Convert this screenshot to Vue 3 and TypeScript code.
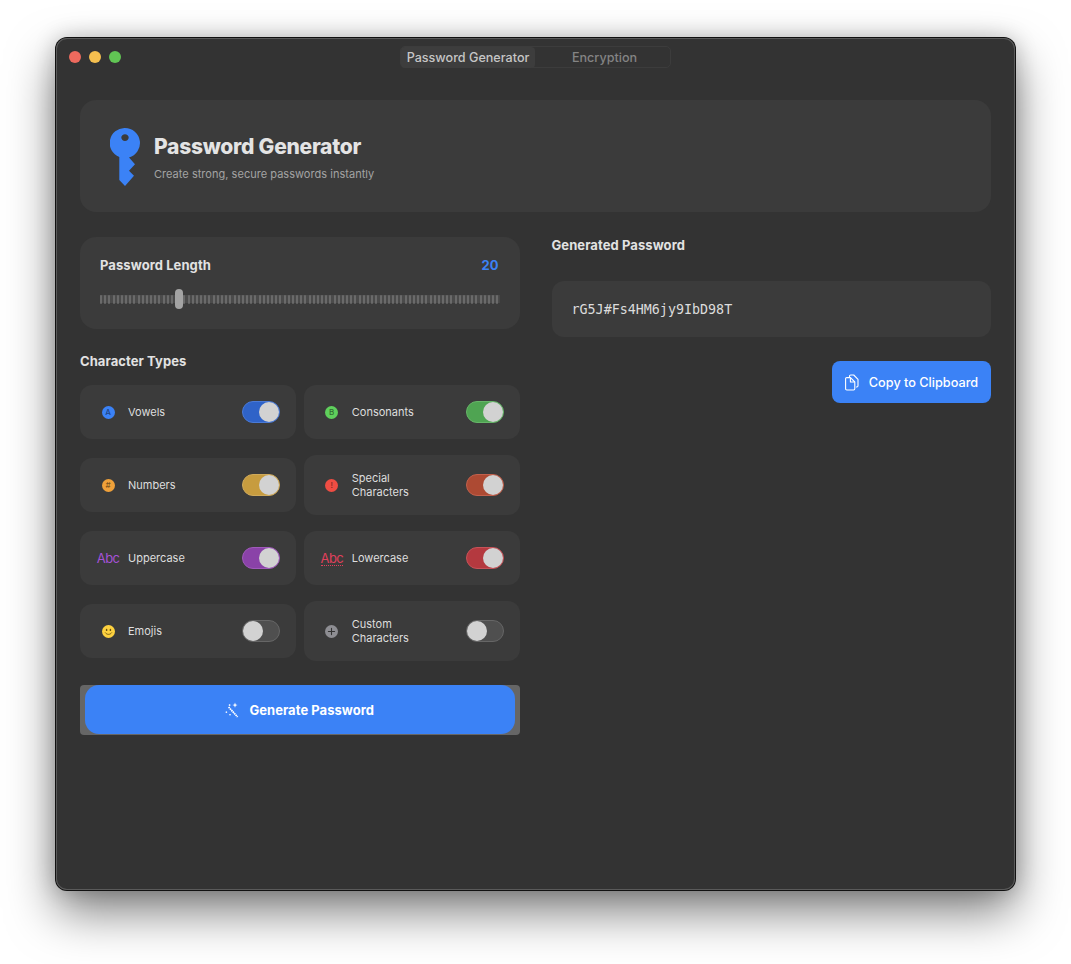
<script setup lang="ts">
interface Option {
  label: string;
  tone: string;
  glyph: string;
  kind: "dot" | "abc" | "under" | "emoji" | "plus";
  on: boolean;
}

const options: Option[] = [
  { label: "Vowels", tone: "blue", glyph: "A", kind: "dot", on: true },
  { label: "Consonants", tone: "green", glyph: "B", kind: "dot", on: true },
  { label: "Numbers", tone: "orange", glyph: "#", kind: "dot", on: true },
  { label: "Special Characters", tone: "red", glyph: "!", kind: "dot", on: true },
  { label: "Uppercase", tone: "purple", glyph: "Abc", kind: "abc", on: true },
  { label: "Lowercase", tone: "crimson", glyph: "Abc", kind: "under", on: true },
  { label: "Emojis", tone: "off", glyph: "", kind: "emoji", on: false },
  { label: "Custom Characters", tone: "off", glyph: "", kind: "plus", on: false },
];

const ticks: number[] = Array.from({ length: 96 }, (_, i) => i);
</script>

<template>
  <div class="page">
    <main class="window">
      <header class="titlebar">
        <div class="lights">
          <span class="light light-red"></span>
          <span class="light light-yellow"></span>
          <span class="light light-green"></span>
        </div>
        <nav class="segments">
          <span class="segment segment-active">Password Generator</span>
          <span class="segment segment-rest">Encryption</span>
        </nav>
      </header>

      <div class="content">
        <section class="hero">
          <svg class="key" width="30" height="58" viewBox="0 0 30 58">
            <path
              fill="#3b82f6"
              fill-rule="evenodd"
              d="M15 0a15 15 0 0 1 4 29.45L25 36.3 19 42.7l5 5L15 58l-5.7-6V29A15 15 0 0 1 15 0Zm0 6.2c-2 0-3.7 1.5-3.7 3.4S13 13 15 13s3.7-1.5 3.7-3.4S17 6.2 15 6.2Z"
            />
          </svg>
          <div class="hero-text">
            <h1>Password Generator</h1>
            <p>Create strong, secure passwords instantly</p>
          </div>
        </section>

        <div class="columns">
          <div class="left">
            <section class="length-card">
              <div class="length-head">
                <span class="heading">Password Length</span>
                <span class="length-value">20</span>
              </div>
              <div class="slider">
                <span v-for="t in ticks" :key="t" class="tick"></span>
                <span class="thumb"></span>
              </div>
            </section>

            <h2 class="heading types-title">Character Types</h2>
            <div class="grid">
              <div v-for="o in options" :key="o.label" class="option">
                <span class="icon-box">
                  <span v-if="o.kind === 'dot'" class="dot" :class="'dot-' + o.tone">{{ o.glyph }}</span>
                  <span v-else-if="o.kind === 'abc'" class="abc abc-purple">{{ o.glyph }}</span>
                  <span v-else-if="o.kind === 'under'" class="abc abc-crimson">{{ o.glyph }}</span>
                  <svg v-else-if="o.kind === 'emoji'" width="13" height="13" viewBox="0 0 13 13">
                    <circle cx="6.5" cy="6.5" r="6.5" fill="#fdd13f" />
                    <ellipse cx="4.6" cy="4.9" rx=".8" ry="1.2" fill="#6b5310" />
                    <ellipse cx="8.4" cy="4.9" rx=".8" ry="1.2" fill="#6b5310" />
                    <path d="M3.4 7.8c1.5 2.2 4.7 2.2 6.2 0" fill="none" stroke="#6b5310" stroke-width=".9" stroke-linecap="round" />
                  </svg>
                  <svg v-else width="13" height="13" viewBox="0 0 13 13">
                    <circle cx="6.5" cy="6.5" r="6.5" fill="#8e8e93" />
                    <path d="M6.5 3.4v6.2M3.4 6.5h6.2" stroke="#333" stroke-width="1.1" stroke-linecap="round" />
                  </svg>
                </span>
                <span class="option-label">{{ o.label }}</span>
                <span class="toggle" :class="['toggle-' + o.tone, { 'toggle-on': o.on }]">
                  <span class="knob"></span>
                </span>
              </div>
            </div>

            <button class="generate" type="button">
              <span class="generate-inner">
                <svg width="15" height="16" viewBox="0 0 15 16" fill="none" stroke="#fff">
                  <path d="M3.6 5l9 10" stroke-width="1.7" stroke-dasharray="1.6 .5" />
                  <path d="M10 .5l.7 1.9 1.9.7-1.9.7-.7 1.9-.7-1.9-1.9-.7 1.9-.7z" fill="#fff" stroke="none" />
                  <path d="M4.6 2.2v1.8M3.7 3.1h1.8M1.4 9.4v1.6M.6 10.2h1.6M5 12v1.4M4.3 12.7h1.4" stroke-width=".8" />
                </svg>
                Generate Password
              </span>
            </button>
          </div>

          <div class="right">
            <h2 class="heading result-title">Generated Password</h2>
            <div class="result">rG5J#Fs4HM6jy9IbD98T</div>
            <div class="actions">
              <button class="copy" type="button">
                <svg width="16" height="17" viewBox="0 0 16 17" fill="none" stroke="#fff" stroke-width="1.1" stroke-linejoin="round">
                  <path d="M5.5 3.4V2.2c0-.7.5-1.2 1.2-1.2h3l4.3 4.4v6.4c0 .7-.5 1.2-1.2 1.2H12" />
                  <path d="M2.8 3.6h3.7L10.8 8v6.8c0 .7-.5 1.2-1.2 1.2H2.8c-.7 0-1.2-.5-1.2-1.2V4.8c0-.7.5-1.2 1.2-1.2Z" />
                  <path d="M6.4 3.8V8h4.2" />
                </svg>
                Copy to Clipboard
              </button>
            </div>
          </div>
        </div>
      </div>
    </main>
  </div>
</template>

<style>
html,
body {
  background: #fff;
}
</style>

<style scoped>
.page {
  width: 1071px;
  height: 964px;
  padding: 38px 0 0 56px;
  box-sizing: border-box;
  overflow: hidden;
  font-family: Inter, "Liberation Sans", sans-serif;
}
.window {
  width: 959px;
  height: 852px;
  box-sizing: border-box;
  background: #333;
  border-radius: 11px;
  box-shadow:
    0 0 0 1px #111,
    inset 0 0 0 1px #5a5a5a,
    0 22px 48px rgba(0, 0, 0, 0.5),
    0 0 22px rgba(0, 0, 0, 0.22);
}
.titlebar {
  height: 38px;
  position: relative;
  display: flex;
  align-items: center;
  justify-content: center;
}
.lights {
  position: absolute;
  left: 13px;
  top: 13px;
  display: flex;
  gap: 8px;
}
.light {
  width: 12px;
  height: 12px;
  border-radius: 50%;
}
.light-red {
  background: #ed6a5e;
}
.light-yellow {
  background: #f5bf4f;
}
.light-green {
  background: #61c554;
}
.segments {
  width: 271px;
  height: 22px;
  box-sizing: border-box;
  border: 1px solid #3c3c3c;
  border-radius: 5px;
  display: grid;
  grid-template-columns: 134px 1fr;
  font-size: 12.6px;
  font-weight: 500;
  line-height: 21px;
  text-align: center;
  color: #848484;
}
.segment-rest {
  padding-left: 4px;
}
.segment-active {
  background: #3d3d3d;
  border-radius: 4px;
  color: #c6c6c6;
}
.content {
  padding: 24px 24px 0;
}
.hero {
  height: 112px;
  box-sizing: border-box;
  padding: 0 30px;
  background: #3b3b3b;
  border-radius: 16px;
  display: flex;
  align-items: center;
  gap: 14px;
}
.key {
  flex: none;
  margin-top: 2px;
}
.hero h1 {
  margin: 1px 0 0;
  font-size: 21px;
  line-height: 28px;
  font-weight: 800;
  color: #e4e4e4;
  letter-spacing: -0.25px;
}
.hero p {
  margin: 6px 0 0;
  font-size: 11px;
  line-height: 14px;
  color: #a3a3a3;
  letter-spacing: 0.03px;
}
.columns {
  margin-top: 25px;
  display: grid;
  grid-template-columns: 1fr 1fr;
  gap: 32px;
}
.heading {
  font-size: 13px;
  line-height: 16px;
  font-weight: 700;
  letter-spacing: 0.08px;
  color: #e2e2e2;
  margin: 0;
}
.length-card {
  height: 92px;
  box-sizing: border-box;
  padding: 20px;
  background: #3b3b3b;
  border-radius: 16px;
}
.length-head {
  display: flex;
  justify-content: space-between;
}
.length-value {
  font-size: 13px;
  line-height: 16px;
  font-weight: 700;
  margin-right: 1px;
  color: #3b82f6;
}
.slider {
  position: relative;
  margin-top: 16px;
  height: 20px;
  display: flex;
  align-items: center;
  justify-content: space-between;
  background: linear-gradient(#4b4b4b, #4b4b4b) center / 100% 8px no-repeat;
}
.tick {
  width: 2px;
  height: 9px;
  background: #6a6a6a;
  border-radius: 1px;
}
.thumb {
  position: absolute;
  left: 75px;
  top: 0;
  width: 8px;
  height: 20px;
  border-radius: 4px;
  background: #a3a3a3;
}
.types-title {
  margin-top: 24px;
  margin-bottom: 16px;
}
.grid {
  display: grid;
  grid-template-columns: 1fr 1fr;
  gap: 16px 8px;
  align-items: center;
}
.option {
  padding: 16px;
  background: #3b3b3b;
  border-radius: 12px;
  display: flex;
  align-items: center;
  gap: 8px;
}
.icon-box {
  width: 24px;
  height: 22px;
  display: flex;
  align-items: center;
  justify-content: center;
  flex: none;
}
.dot {
  width: 13px;
  height: 13px;
  border-radius: 50%;
  font-size: 8px;
  line-height: 13px;
  text-align: center;
  font-weight: 500;
  color: rgba(0, 0, 0, 0.5);
}
.dot-blue {
  background: #3b82f6;
}
.dot-green {
  background: #5fd05c;
}
.dot-orange {
  background: #f0a13a;
}
.dot-red {
  background: #ef4d43;
}
.abc {
  font-size: 13px;
  line-height: 16px;
  font-weight: 400;
  letter-spacing: -0.7px;
}
.abc-purple {
  color: #a552d6;
}
.abc-crimson {
  color: #e0405c;
  border-bottom: 1px dotted #e0405c;
  line-height: 14px;
}
.option-label {
  flex: 1;
  max-width: 72px;
  margin-right: auto;
  font-size: 11px;
  line-height: 14px;
  color: #dedede;
}
.toggle {
  margin-left: auto;
  width: 38px;
  height: 22px;
  box-sizing: border-box;
  border: 1px solid #666;
  border-radius: 11px;
  background: #4f4f4f;
  display: flex;
  align-items: center;
  flex: none;
}
.toggle-on {
  justify-content: flex-end;
}
.knob {
  width: 20px;
  height: 20px;
  border-radius: 50%;
  background: #d2d2d2;
}
.toggle-blue {
  background: #2f63c8;
  border-color: #4a7ad6;
}
.toggle-green {
  background: #4fa452;
  border-color: #66b568;
}
.toggle-orange {
  background: #c79c3f;
  border-color: #d0aa5a;
}
.toggle-red {
  background: #ad4a33;
  border-color: #c2604c;
}
.toggle-purple {
  background: #8a42a8;
  border-color: #a05abb;
}
.toggle-crimson {
  background: #b4393f;
  border-color: #c65258;
}
.generate {
  margin-top: 24px;
  width: 100%;
  height: 50px;
  padding: 0 5px 1px;
  border: none;
  border-radius: 4px;
  background: #666;
  display: block;
  font-family: inherit;
}
.generate-inner {
  height: 100%;
  box-sizing: border-box;
  padding-top: 1px;
  border-radius: 14px;
  background: #3b82f6;
  color: #fff;
  font-size: 13px;
  font-weight: 700;
  letter-spacing: 0.05px;
  display: flex;
  align-items: center;
  justify-content: center;
  gap: 9px;
}
.result-title {
  margin-bottom: 28px;
}
.result {
  height: 56px;
  box-sizing: border-box;
  padding: 0 20px;
  background: #3b3b3b;
  border-radius: 12px;
  display: flex;
  align-items: center;
  font-family: "DejaVu Sans Mono", "Liberation Mono", monospace;
  font-size: 13.35px;
  color: #dcdcdc;
}
.actions {
  margin-top: 24px;
  display: flex;
  justify-content: flex-end;
}
.copy {
  width: 159px;
  height: 42px;
  border: none;
  border-radius: 8px;
  background: #3b82f6;
  color: #fff;
  font-family: inherit;
  font-size: 12.7px;
  font-weight: 500;
  display: flex;
  align-items: center;
  justify-content: center;
  gap: 9px;
  padding: 0 1px 0 0;
}
</style>
